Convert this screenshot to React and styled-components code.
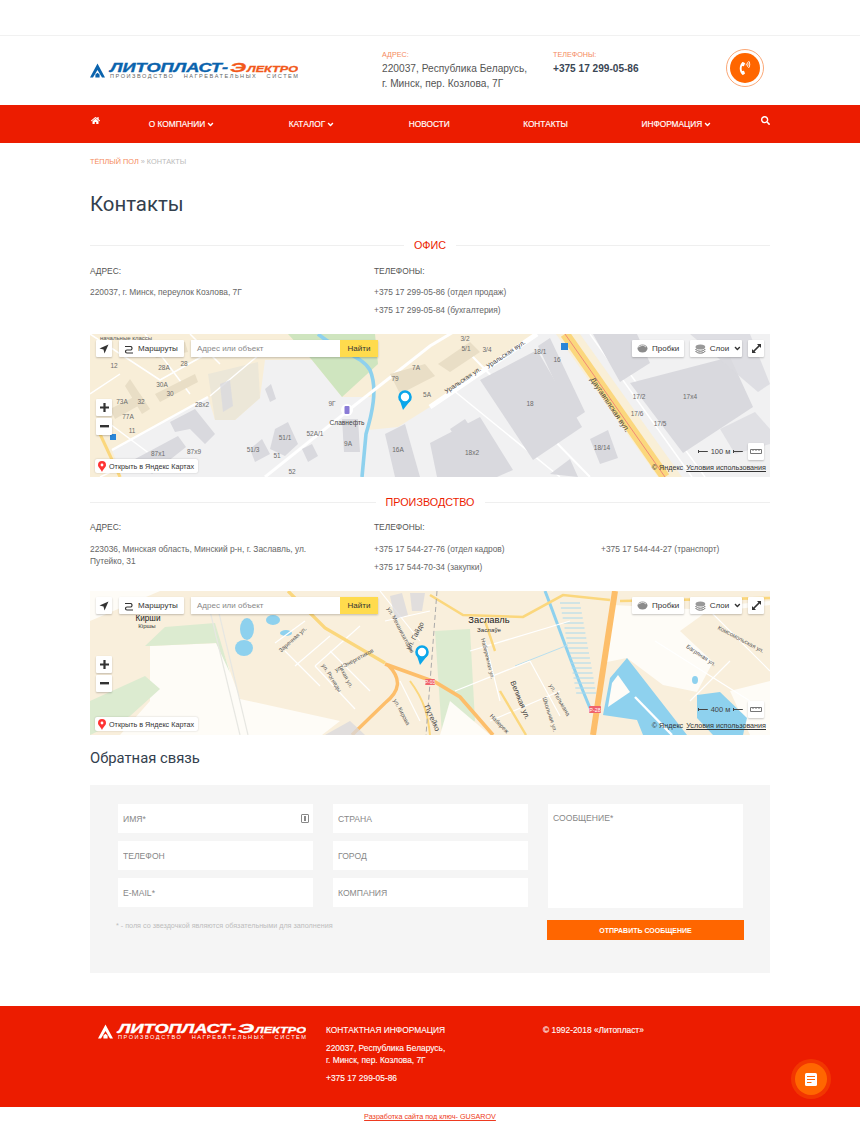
import React from 'react';
import styled, {createGlobalStyle} from 'styled-components';
import {FaHome, FaSearch, FaAngleDown, FaPhoneVolume} from 'react-icons/fa';

const RED = '#ec1c00';
const ORANGE = '#ff6600';

const GlobalStyle = createGlobalStyle`
  html, body {
    margin: 0;
    padding: 0;
    background: #fff;
    font-family: "Liberation Sans", Arial, sans-serif;
  }
  * { box-sizing: border-box; }
`;

const TopStrip = styled.div`
  height: 36px;
  border-bottom: 1px solid #f1f1f1;
`;

const Container = styled.div`
  width: 680px;
  margin: 0 auto;
`;

const Header = styled(Container)`
  height: 69px;
  display: flex;
  align-items: flex-start;
`;

const LogoSlot = styled.div`
  width: 292px;
  padding-top: 26px;
  flex: none;
`;

const HeaderCol = styled.div`
  width: ${p => p.$w}px;
  padding-top: 14px;
  flex: none;
`;

const HeaderLabel = styled.div`
  font-size: 7.2px;
  line-height: 10px;
  color: #f58a5c;
`;

const HeaderText = styled.div`
  font-size: 10.2px;
  line-height: 15px;
  margin-top: 1px;
  color: #555;
`;

const HeaderPhone = styled.div`
  font-size: 10.1px;
  line-height: 15px;
  margin-top: 1px;
  font-weight: bold;
  color: #3a4654;
`;

const CallRing = styled.div`
  width: 38px;
  height: 38px;
  margin: 13px 0 0 34px;
  border-radius: 50%;
  border: 1px solid #fba877;
  display: flex;
  align-items: center;
  justify-content: center;
`;

const CallDot = styled.div`
  width: 30px;
  height: 30px;
  border-radius: 50%;
  background: ${ORANGE};
  color: #fff;
  display: flex;
  align-items: center;
  justify-content: center;
`;

const NavBar = styled.nav`
  height: 38px;
  background: ${RED};
`;

const NavInner = styled(Container)`
  height: 100%;
  display: flex;
  align-items: center;
  justify-content: space-between;
  color: #fff;
`;

const NavIcon = styled.div`
  display: flex;
  margin: -8px 0 0 ${p => p.$left || 0}px;
  font-size: 9px;
`;

const Menu = styled.div`
  display: flex;
  gap: 73.5px;
`;

const MenuItem = styled.div`
  display: flex;
  align-items: center;
  gap: 1px;
  font-size: 8.3px;
  line-height: 11px;
  -webkit-text-stroke: 0.15px #fff;
  white-space: nowrap;
`;

const Crumbs = styled.div`
  margin-top: 14px;
  font-size: 7.3px;
  line-height: 10px;
  color: #bbb;
  & span { color: #f58a5c; }
`;

const PageTitle = styled.h1`
  margin: 23px 0 0;
  font-family: Roboto, sans-serif;
  font-weight: 400;
  font-size: 20.4px;
  line-height: 28px;
  color: #33404d;
`;

const SectionHeading = styled.div`
  display: flex;
  align-items: center;
  justify-content: center;
  margin-top: ${p => p.$top}px;
  height: 14px;
  font-size: 10.8px;
  color: ${RED};
  &::before, &::after {
    content: '';
    flex: 1;
    height: 1px;
    background: #efefef;
  }
  & span { padding: 0 10px; }
`;

const ContactGrid = styled.div`
  display: grid;
  grid-template-columns: 284px 227px 1fr;
  margin-top: ${p => p.$top}px;
  font-size: 8.4px;
  color: #666;
`;

const ContactLabel = styled.div`
  line-height: 11px;
  margin-bottom: ${p => p.$gap}px;
  color: #555;
`;

const ContactLine = styled.div`
  line-height: 12px;
  min-height: 18px;
`;

const AddressText = styled.div`
  line-height: 12px;
  width: 225px;
`;

const MapBox = styled.div`
  position: relative;
  width: 680px;
  height: ${p => p.$h}px;
  margin-top: ${p => p.$top}px;
  overflow: hidden;
  & > svg { display: block; }
`;

const MapGroup = styled.div`
  position: absolute;
  left: ${p => p.$left ?? 'auto'};
  right: ${p => p.$right ?? 'auto'};
  top: ${p => p.$topPos ?? 'auto'};
  bottom: ${p => p.$bottom ?? 'auto'};
  display: flex;
  flex-direction: ${p => p.$column ? 'column' : 'row'};
  align-items: center;
  gap: ${p => p.$gap ?? 6}px;
`;

const MapBtn = styled.div`
  height: 17px;
  width: ${p => p.$w}px;
  flex: none;
  background: #fff;
  border-radius: 1px;
  box-shadow: 0 1px 2px rgba(0,0,0,.22);
  display: flex;
  align-items: center;
  justify-content: ${p => p.$center ? 'center' : 'flex-start'};
  padding: ${p => p.$center ? '0' : '0 0 0 5px'};
  gap: 4px;
  font-size: 8px;
  color: #333;
  white-space: nowrap;
`;

const SearchBox = styled.div`
  display: flex;
  width: 187px;
  height: 17px;
  box-shadow: 0 1px 2px rgba(0,0,0,.22);
  background: #fff;
`;

const SearchField = styled.div`
  flex: 1;
  padding-left: 6px;
  font-size: 8px;
  line-height: 17px;
  color: #888;
`;

const SearchButton = styled.div`
  width: 38px;
  background: #ffdb4d;
  font-size: 8px;
  line-height: 17px;
  text-align: center;
  color: #333;
`;

const OpenLink = styled.div`
  height: 14px;
  display: flex;
  align-items: center;
  gap: 3px;
  padding: 0 4px 0 3px;
  background: #fff;
  border-radius: 2px;
  box-shadow: 0 0 2px rgba(0,0,0,.2);
  font-size: 7.2px;
  color: #333;
  white-space: nowrap;
`;

const ScaleText = styled.div`
  width: 45px;
  display: flex;
  align-items: center;
  gap: 3px;
  font-size: 7.5px;
  color: #444;
  white-space: nowrap;
  &::before, &::after {
    content: '';
    flex: 1;
    height: 3px;
    border-left: 1px solid #444;
    background: linear-gradient(#444, #444) center / 100% 1px no-repeat;
  }
`;

const Attribution = styled.div`
  font-size: 7.2px;
  color: #333;
  white-space: nowrap;
  & u { margin-left: 3px; }
`;

const FormTitle = styled.h2`
  margin: 13px 0 0;
  font-family: Roboto, sans-serif;
  font-weight: 400;
  font-size: 14.8px;
  line-height: 20px;
  color: #33404d;
`;

const FormPanel = styled.form`
  margin-top: 17px;
  height: 188px;
  padding: 19px 27px 0 28px;
  background: #f5f5f5;
  display: grid;
  grid-template-columns: 195px 195px 195px;
  grid-auto-rows: min-content;
  column-gap: 20px;
`;

const FieldColumn = styled.div`
  display: flex;
  flex-direction: column;
  gap: 8px;
`;

const FieldWrap = styled.div`
  position: relative;
`;

const Field = styled.input`
  display: block;
  width: 100%;
  height: 29px;
  border: 0;
  outline: 0;
  background: #fff;
  padding: 0 5px;
  font-family: inherit;
  font-size: 8.6px;
  &::placeholder { color: #888; opacity: 1; }
`;

const MessageField = styled.textarea`
  display: block;
  width: 100%;
  height: 104px;
  border: 0;
  outline: 0;
  resize: none;
  background: #fff;
  padding: 9px 5px;
  font-family: inherit;
  font-size: 8.6px;
  &::placeholder { color: #888; opacity: 1; }
`;

const KeyBadge = styled.div`
  position: absolute;
  top: 10px;
  right: 4px;
  width: 8px;
  height: 9px;
  border: 1px solid #888;
  border-radius: 1px;
  &::after {
    content: '';
    position: absolute;
    left: 2px;
    top: 1px;
    width: 2px;
    height: 5px;
    background: #888;
  }
`;

const SubmitButton = styled.button`
  display: block;
  width: 197px;
  height: 20px;
  margin: 12px 0 0 -1px;
  border: 0;
  background: ${ORANGE};
  color: #fff;
  font-family: inherit;
  font-size: 7px;
  font-weight: bold;
  text-align: center;
  padding: 0;
`;

const Note = styled.div`
  grid-column: 1 / 3;
  margin: -19px 0 0 -2px;
  font-size: 7.2px;
  line-height: 9px;
  color: #bdbdbd;
`;

const Footer = styled.footer`
  margin-top: 33px;
  height: 101px;
  background: ${RED};
  color: #fff;
`;

const FooterInner = styled(Container)`
  display: flex;
  font-size: 8.4px;
`;

const FooterLogo = styled.div`
  width: 236px;
  padding: 17px 0 0 8px;
  flex: none;
`;

const FooterCol = styled.div`
  width: ${p => p.$w}px;
  flex: none;
  padding-top: 18px;
`;

const FooterLine = styled.div`
  line-height: 12px;
  margin-top: ${p => p.$top || 0}px;
  -webkit-text-stroke: 0.1px #fff;
`;

const DevLine = styled.div`
  height: 22px;
  padding-top: 5px;
  text-align: center;
  font-size: 7.2px;
  line-height: 10px;
  color: #ee3a20;
  text-decoration: underline;
`;

const Fab = styled.div`
  position: fixed;
  right: 33px;
  bottom: 34px;
  width: 32px;
  height: 32px;
  border-radius: 50%;
  background: ${ORANGE};
  box-shadow: 0 0 0 4px rgba(255, 102, 0, .35);
  display: flex;
  align-items: center;
  justify-content: center;
`;

const LOGO_FONT = "'Liberation Sans', sans-serif";

const Logo = ({main, accent, sub}) => (
  <svg width="208" height="17" viewBox="0 0 208 17">
    <path fillRule="evenodd" fill={main}
      d="M0 15.5 L3 15.5 L7.5 8 L12 15.5 L15 15.5 L7.5 1.5 Z M5.4 15.5 L5.4 12.6 L7.5 10.8 L9.6 12.6 L9.6 15.5 Z"/>
    <g fontFamily={LOGO_FONT} fontWeight="bold" fontStyle="italic">
      <text x="20" y="10" fontSize="12.6" fill={main} stroke={main} strokeWidth=".35"
        textLength="118" lengthAdjust="spacingAndGlyphs">ЛИТОПЛАСТ-</text>
      <text x="140" y="10" fontSize="12.6" fill={accent} stroke={accent} strokeWidth=".35"
        textLength="16" lengthAdjust="spacingAndGlyphs">Э</text>
      <text x="157" y="10" fontSize="8.8" fill={accent} stroke={accent} strokeWidth=".3"
        textLength="51" lengthAdjust="spacingAndGlyphs">ЛЕКТРО</text>
    </g>
    <text x="20" y="16.4" fontFamily={LOGO_FONT} fontSize="5.6" fill={sub}
      textLength="188" lengthAdjust="spacing" xmlSpace="preserve">ПРОИЗВОДСТВО   НАГРЕВАТЕЛЬНЫХ   СИСТЕМ</text>
  </svg>
);

const Label = ({x, y, size = 6.5, fill = '#6b6b6b', r = 0, children}) => (
  <text x={x} y={y} fontSize={size} fill={fill} fontFamily={LOGO_FONT}
    textAnchor="middle" transform={r ? `rotate(${r} ${x} ${y})` : undefined}>{children}</text>
);

const Pin = ({x, y}) => (
  <g>
    <path d={`M${x - 2} ${y + 13} L${x - 5} ${y + 4} L${x + 5} ${y + 4} Z`} fill="#0ba6ea"/>
    <circle cx={x} cy={y} r="5.5" fill="#fff" stroke="#0ba6ea" strokeWidth="2.6"/>
  </g>
);

const BLD = '#d9d9de';
const BEIGE_BLD = '#e9dec6';

const OfficeMap = () => (
  <svg width="680" height="143" viewBox="0 0 680 143">
    <rect width="680" height="143" fill="#f1f1f2"/>
    <path d="M0 0 H447 L340 73 L308 93 L278 96 L282 63 L252 63 L222 26 L175 26 L170 64 L145 86 L125 86 L118 63 L22 116 L32 143 H0 Z" fill="#f8eed8"/>
    <path d="M118 40 L168 28 L170 64 L145 86 L125 86 Z" fill="#ece7d8"/>
    <path d="M198 0 H285 L288 30 L252 63 L222 26 Z" fill="#cfe5bf"/>
    <path d="M228 0 C250 18 272 22 280 36 C288 55 282 80 276 100 L272 143" fill="none" stroke="#8ed1ee" strokeWidth="3.6"/>
    <path d="M466 0 L568 143 H592 L490 0 Z" fill="#f9efd7"/>
    <path d="M0 0 L70 46 L120 18 M20 90 L60 120 L10 143 M55 0 L100 60 M0 60 L30 40 M100 0 L130 30" fill="none" stroke="#fff" strokeWidth="1.5"/>
    <path d="M22 116 L118 63" fill="none" stroke="#fff" strokeWidth="2.5"/>
    <path d="M120 62 L170 20" fill="none" stroke="#fff" strokeWidth="1.5"/>
    <path d="M10 100 L30 143" fill="none" stroke="#fbd77d" strokeWidth="3"/>
    <path d="M175 143 L260 75 L340 12 L365 -3" fill="none" stroke="#fff" strokeWidth="3"/>
    <path d="M340 73 L447 0" fill="none" stroke="#fff" strokeWidth="5"/>
    <path d="M363 56 L470 143" fill="none" stroke="#fff" strokeWidth="1.5"/>
    <path d="M380 20 L500 143" fill="none" stroke="#fff" strokeWidth="2"/>
    <path d="M475 0 L575 143" fill="none" stroke="#fbd77d" strokeWidth="10"/>
    <path d="M475 0 L575 143" fill="none" stroke="#f08a76" strokeWidth="1"/>
    <path d="M500 0 L602 143 M511 0 L615 143" fill="none" stroke="#fff" strokeWidth="1.5"/>
    <g fill={BLD}>
      <path d="M390 46 L447 16 L492 93 L443 126 Z"/>
      <path d="M340 109 L390 83 L423 136 L407 143 H347 Z"/>
      <path d="M540 49 L640 23 L663 73 L593 119 Z"/>
      <path d="M503 0 L530 48 L560 29 L547 0 Z"/>
      <path d="M448 12 L460 4 L495 78 L483 86 Z"/>
      <path d="M500 105 L518 96 L528 124 L510 130 Z"/>
      <path d="M460 140 L480 125 L488 143 Z"/>
      <path d="M600 0 L660 0 L680 50 L668 58 Z" opacity=".8"/>
      <path d="M630 95 L665 78 L680 95 L680 110 L645 120 Z" opacity=".7"/>
      <path d="M80 88 L105 75 L125 100 L115 110 L100 95 L85 98 Z"/>
      <path d="M45 125 L88 102 L96 113 L62 140 Z"/>
      <path d="M130 50 L140 46 L143 72 L133 78 Z" opacity=".8"/>
      <path d="M175 55 L181 50 L186 65 L180 68 Z"/>
      <path d="M185 95 L198 88 L208 110 L195 122 L180 115 Z"/>
      <path d="M160 115 L172 105 L180 120 L165 128 Z"/>
      <path d="M252 85 L268 85 L270 118 L254 118 Z"/>
      <path d="M295 100 L315 90 L330 143 H305 Z"/>
      <path d="M360 95 L375 85 L385 100 L370 110 Z"/>
      <path d="M212 115 L222 110 L228 122 L218 128 Z"/>
    </g>
    <g fill={BEIGE_BLD}>
      <path d="M40 45 L60 75 L52 80 L35 52 Z"/>
      <path d="M65 60 L105 40 L108 48 L70 68 Z"/>
      <path d="M20 75 L50 60 L55 68 L25 85 Z"/>
      <path d="M300 40 L335 30 L345 42 L310 60 Z"/>
      <path d="M348 30 L380 8 L390 18 L360 38 Z"/>
      <path d="M60 15 L95 8 L98 18 L66 24 Z"/>
    </g>
    <circle cx="257" cy="76" r="6" fill="#fff"/>
    <rect x="254.5" y="72" width="5" height="8" rx="1" fill="#8a7bd6"/>
    <rect x="20" y="100" width="6" height="6" fill="#2a86d8"/>
    <rect x="471" y="9" width="7" height="7" fill="#2a86d8"/>
    <Label x={24} y={34}>12</Label>
    <Label x={74} y={36}>28A</Label>
    <Label x={94} y={32}>28</Label>
    <Label x={72} y={53}>30A</Label>
    <Label x={80} y={62}>30</Label>
    <Label x={32} y={70}>73A</Label>
    <Label x={51} y={70}>32</Label>
    <Label x={38} y={85}>77A</Label>
    <Label x={42} y={99}>11</Label>
    <Label x={112} y={73}>28x2</Label>
    <Label x={68} y={122}>87x1</Label>
    <Label x={104} y={120}>87x9</Label>
    <Label x={242} y={72}>9Г</Label>
    <Label x={257} y={91} size={6.6} fill="#444">Славнефть</Label>
    <Label x={225} y={102}>52A/1</Label>
    <Label x={195} y={106}>51/1</Label>
    <Label x={163} y={118}>51/3</Label>
    <Label x={187} y={124}>51</Label>
    <Label x={202} y={140}>52</Label>
    <Label x={258} y={112}>9A</Label>
    <Label x={308} y={118}>16A</Label>
    <Label x={305} y={47}>79</Label>
    <Label x={326} y={36}>7A</Label>
    <Label x={337} y={63}>5A</Label>
    <Label x={36} y={6} size={6} fill="#555">начальные классы</Label>
    <Label x={376} y={17}>5/1</Label>
    <Label x={397} y={18}>3/4</Label>
    <Label x={375} y={7}>3/2</Label>
    <Label x={450} y={20}>18/1</Label>
    <Label x={467} y={28}>16</Label>
    <Label x={440} y={72}>18</Label>
    <Label x={382} y={121}>18x2</Label>
    <Label x={512} y={116}>18/14</Label>
    <Label x={549} y={65}>17/2</Label>
    <Label x={547} y={82}>17/6</Label>
    <Label x={570} y={92}>17/5</Label>
    <Label x={600} y={65}>17x4</Label>
    <Label x={374} y={48} r={-34} fill="#444">Уральская ул.</Label>
    <Label x={417} y={22} r={-34} fill="#444">Уральская вул.</Label>
    <Label x={518} y={72} size={7.4} r={56} fill="#444">Даугавпілская вул.</Label>
    <Pin x={315} y={63}/>
  </svg>
);

const FactoryMap = () => (
  <svg width="680" height="144" viewBox="0 0 680 144">
    <rect width="680" height="144" fill="#f9efdc"/>
    <path d="M60 55 L130 52 L150 108 L250 130 L232 144 H30 L60 110 Z" fill="#fefcf7"/>
    <path d="M0 110 L55 85 L70 98 L40 125 L0 144 Z" fill="#dcebd0"/>
    <path d="M55 55 L75 36 L125 32 L140 82 L126 52 L60 55 Z" fill="#dcebd0"/>
    <path d="M60 0 H70 L0 30 V0 Z" fill="#fefcf7"/>
    <path d="M523 14 L600 18 L680 10 L680 14 L615 22 L590 40 L623 71 L607 101 L573 94 L537 67 L517 71 Z" fill="#fefcf7"/>
    <path d="M345 40 L380 38 L385 130 L352 144 Z" fill="#dcebd0"/>
    <path d="M360 110 L400 144 H350 Z" fill="#fefcf7"/>
    <path d="M640 100 L680 90 V144 H660 Z" fill="#fefcf7"/>
    <g fill="#8ed1ee">
      <ellipse cx="157" cy="38" rx="7" ry="11"/>
      <ellipse cx="154" cy="57" rx="9" ry="8"/>
      <ellipse cx="183" cy="29" rx="7" ry="5"/>
      <ellipse cx="196" cy="42" rx="6" ry="3"/>
      <path d="M537 67 L597 144 H553 L547 129 L513 124 L520 87 Z"/>
      <path d="M607 104 L630 101 L657 127 L653 144 H623 L607 127 Z"/>
      <ellipse cx="605" cy="89" rx="3" ry="4"/>
    </g>
    <path d="M528 84 L540 101 L518 116 L522 92 Z" fill="#fefcf7"/>
    <path d="M545 106 L582 144" fill="none" stroke="#fff" strokeWidth="2.4"/>
    <path d="M455 0 C465 25 480 70 500 117" fill="none" stroke="#8ed1ee" strokeWidth="3"/>
    <path d="M425 75 L478 54" fill="none" stroke="#b9dfee" strokeWidth="1"/>
    <g stroke="#a8d9ee" strokeWidth="1">
      {Array.from({length: 19}, (_, i) => (
        <line key={i} x1={470 + i * 0.9} y1={12 + i * 5} x2={490 + i * 0.9} y2={12 + i * 5}/>
      ))}
    </g>
    <g fill="none" stroke="#fff" strokeWidth="1.2">
      <path d="M185 52 L215 30 M195 60 L230 95 M225 75 L270 35 M225 75 L265 118 M240 60 L280 100 M205 75 L240 45"/>
      <path d="M290 0 L330 50 M295 30 L340 20 M310 90 L330 130"/>
      <path d="M380 60 L480 30 M365 100 L440 70 M400 130 L470 100 M440 70 L470 125 M395 50 L410 110"/>
      <path d="M565 50 L660 110 M620 20 L680 80 M640 70 L600 110"/>
      <path d="M120 20 L150 144 M128 18 L158 144" stroke="#e7e7e2"/>
    </g>
    <path d="M198 0 L235 37 L295 72" fill="none" stroke="#fbd77d" strokeWidth="3.2"/>
    <path d="M295 73 L345 91 L370 106 L403 144" fill="none" stroke="#fdbe6a" strokeWidth="3.6"/>
    <path d="M298 74 C312 88 310 100 295 112 L262 144" fill="none" stroke="#fdbe6a" strokeWidth="3.4"/>
    <path d="M320 90 C335 110 338 125 340 144" fill="none" stroke="#fbd77d" strokeWidth="2"/>
    <path d="M340 4 L373 24 L433 26 L473 4 L520 9 M530 10 L680 7" fill="none" stroke="#fbd77d" strokeWidth="2.6"/>
    <path d="M405 60 L395 30 M410 100 L436 144" fill="none" stroke="#fbd77d" strokeWidth="2.4"/>
    <path d="M525 0 L503 144" fill="none" stroke="#fdbe6a" strokeWidth="6"/>
    <path d="M347 0 L336 144" fill="none" stroke="#aaa" strokeWidth="1" strokeDasharray="5 3"/>
    <g fill={BLD} opacity=".75">
      <path d="M300 5 L312 2 L318 24 L305 28 Z"/>
      <path d="M320 2 L335 2 L332 20 L322 20 Z"/>
      <path d="M235 144 L260 130 L275 144 Z"/>
    </g>
    <rect x="335" y="88" width="10" height="6" rx="1" fill="#f0636c"/>
    <text x="340" y="93" fontSize="5" fill="#fff" textAnchor="middle" fontFamily={LOGO_FONT}>Р-03</text>
    <rect x="499" y="115" width="12" height="7" rx="1" fill="#f0636c"/>
    <text x="505" y="121" fontSize="5.4" fill="#fff" textAnchor="middle" fontFamily={LOGO_FONT}>Р-28</text>
    <Label x={58} y={30} size={8.2} fill="#222">Кирши</Label>
    <Label x={57} y={37} size={6} fill="#333">Кіршы</Label>
    <Label x={204} y={50} size={5.8} r={-42} fill="#555">Заречная ул.</Label>
    <Label x={240} y={88} size={5.8} r={58} fill="#555">ул. Рогнеды</Label>
    <Label x={265} y={71} size={5.8} r={-28} fill="#555">ул. Энергетиков</Label>
    <Label x={254} y={86} size={5.8} r={62} fill="#555">Тихая ул.</Label>
    <Label x={309} y={40} size={5.8} r={62} fill="#555">ул. Механизаторов</Label>
    <Label x={327} y={46} size={7} r={-62} fill="#444">ул. Гайдо</Label>
    <Label x={310} y={122} size={5.8} r={62} fill="#555">ул. Кирова</Label>
    <Label x={340} y={128} size={7.4} r={66} fill="#444">Путейко</Label>
    <Label x={399} y={32} size={9.4} fill="#222">Заславль</Label>
    <Label x={399} y={41} size={6.2} fill="#333">Заслаўе</Label>
    <Label x={396} y={68} size={5.6} r={76} fill="#555">Набережная ул.</Label>
    <Label x={428} y={110} size={7.4} r={68} fill="#333">Великая ул.</Label>
    <Label x={468} y={110} size={5.8} r={60} fill="#555">ул. Тельмана</Label>
    <Label x={458} y={124} size={5.8} r={72} fill="#555">Школьная ул.</Label>
    <Label x={408} y={134} size={5.8} r={46} fill="#555">Набереж</Label>
    <Label x={650} y={50} size={5.8} r={28} fill="#555">Комсомольская ул.</Label>
    <Label x={610} y={66} size={5.8} r={34} fill="#555">Багряная ул.</Label>
    <Pin x={332} y={61}/>
  </svg>
);

const MapControls = ({scale}) => (
  <>
    <MapGroup $left="6px" $topPos="6px" $gap={7}>
      <MapBtn $w={16} $center>
        <svg width="10" height="10" viewBox="0 0 10 10"><path d="M9.5 .5 L.5 4.5 L4.5 5.5 L5.5 9.5 Z" fill="#333"/></svg>
      </MapBtn>
      <MapBtn $w={65}>
        <svg width="10" height="10" viewBox="0 0 10 10" fill="none" stroke="#333" strokeWidth="1.2">
          <path d="M1 2.5 H7 A2 2 0 0 1 7 6 H3 A1.5 1.5 0 0 0 3 9 H9"/>
        </svg>
        Маршруты
      </MapBtn>
      <SearchBox>
        <SearchField>Адрес или объект</SearchField>
        <SearchButton>Найти</SearchButton>
      </SearchBox>
    </MapGroup>
    <MapGroup $right="6px" $topPos="6px">
      <MapBtn $w={52}>
        <svg width="11" height="9" viewBox="0 0 11 9"><ellipse cx="5.5" cy="4.5" rx="5" ry="4" fill="#8b8b8b"/><path d="M1 3 L6 1 L9 3" stroke="#ddd" fill="none"/></svg>
        Пробки
      </MapBtn>
      <MapBtn $w={52}>
        <svg width="11" height="10" viewBox="0 0 11 10"><ellipse cx="5.5" cy="3" rx="5" ry="2.6" fill="#999"/><path d="M.5 5 C2 8 9 8 10.5 5 M.5 7 C2 10 9 10 10.5 7" stroke="#666" fill="none"/></svg>
        Слои
        <FaAngleDown size={9}/>
      </MapBtn>
      <MapBtn $w={16} $center>
        <svg width="9" height="9" viewBox="0 0 9 9" fill="#333"><path d="M9 0 V4 L7.6 2.6 L2.6 7.6 L4 9 H0 V5 L1.4 6.4 L6.4 1.4 L5 0 Z"/></svg>
      </MapBtn>
    </MapGroup>
    <MapGroup $left="6px" $topPos="65px" $column $gap={2}>
      <MapBtn $w={16} $center><svg width="9" height="9" viewBox="0 0 9 9" fill="#333"><path d="M3.4 0 H5.6 V3.4 H9 V5.6 H5.6 V9 H3.4 V5.6 H0 V3.4 H3.4 Z"/></svg></MapBtn>
      <MapBtn $w={16} $center><svg width="9" height="3" viewBox="0 0 9 3" fill="#333"><rect width="9" height="2.4"/></svg></MapBtn>
    </MapGroup>
    <MapGroup $left="5px" $bottom="4px">
      <OpenLink>
        <svg width="8" height="11" viewBox="0 0 8 11"><path d="M4 0 A4 4 0 0 1 8 4 C8 6.5 5 8 4 11 C3 8 0 6.5 0 4 A4 4 0 0 1 4 0 Z" fill="#f33"/><circle cx="4" cy="4" r="1.4" fill="#fff"/></svg>
        Открыть в Яндекс Картах
      </OpenLink>
    </MapGroup>
    <MapGroup $right="6px" $bottom="17px" $gap={5}>
      <ScaleText>{scale}</ScaleText>
      <MapBtn $w={16} $center>
        <svg width="12" height="5" viewBox="0 0 12 5" fill="none" stroke="#777"><path d="M.5 .5 H11.5 V4.5 H.5 Z M3 .5 V2 M6 .5 V2 M9 .5 V2"/></svg>
      </MapBtn>
    </MapGroup>
    <MapGroup $right="4px" $bottom="5px">
      <Attribution>© Яндекс<u>Условия использования</u></Attribution>
    </MapGroup>
  </>
);

const App = () => (
  <>
    <GlobalStyle/>
    <TopStrip/>
    <Header>
      <LogoSlot>
        <Logo main="#0a63ad" accent="#f2591a" sub="#666"/>
      </LogoSlot>
      <HeaderCol $w={171}>
        <HeaderLabel>АДРЕС:</HeaderLabel>
        <HeaderText>220037, Республика Беларусь,<br/>г. Минск, пер. Козлова, 7Г</HeaderText>
      </HeaderCol>
      <HeaderCol $w={139}>
        <HeaderLabel>ТЕЛЕФОНЫ:</HeaderLabel>
        <HeaderPhone>+375 17 299-05-86</HeaderPhone>
      </HeaderCol>
      <CallRing>
        <CallDot><FaPhoneVolume size={14}/></CallDot>
      </CallRing>
    </Header>
    <NavBar>
      <NavInner>
        <NavIcon $left={1}><FaHome/></NavIcon>
        <Menu>
          <MenuItem>О КОМПАНИИ <FaAngleDown size={9}/></MenuItem>
          <MenuItem>КАТАЛОГ <FaAngleDown size={9}/></MenuItem>
          <MenuItem>НОВОСТИ</MenuItem>
          <MenuItem>КОНТАКТЫ</MenuItem>
          <MenuItem>ИНФОРМАЦИЯ <FaAngleDown size={9}/></MenuItem>
        </Menu>
        <NavIcon><FaSearch/></NavIcon>
      </NavInner>
    </NavBar>
    <Container>
      <Crumbs><span>ТЁПЛЫЙ ПОЛ</span> » КОНТАКТЫ</Crumbs>
      <PageTitle>Контакты</PageTitle>
      <SectionHeading $top={20}><span>ОФИС</span></SectionHeading>
      <ContactGrid $top={14}>
        <div>
          <ContactLabel $gap={9}>АДРЕС:</ContactLabel>
          <AddressText>220037, г. Минск, переулок Козлова, 7Г</AddressText>
        </div>
        <div>
          <ContactLabel $gap={9}>ТЕЛЕФОНЫ:</ContactLabel>
          <ContactLine>+375 17 299-05-86 (отдел продаж)</ContactLine>
          <ContactLine>+375 17 299-05-84 (бухгалтерия)</ContactLine>
        </div>
      </ContactGrid>
      <MapBox $h={143} $top={12}>
        <OfficeMap/>
        <MapControls scale="100 м"/>
      </MapBox>
      <SectionHeading $top={18}><span>ПРОИЗВОДСТВО</span></SectionHeading>
      <ContactGrid $top={13}>
        <div>
          <ContactLabel $gap={10}>АДРЕС:</ContactLabel>
          <AddressText>223036, Минская область, Минский р-н, г. Заславль, ул. Путейко, 31</AddressText>
        </div>
        <div>
          <ContactLabel $gap={10}>ТЕЛЕФОНЫ:</ContactLabel>
          <ContactLine>+375 17 544-27-76 (отдел кадров)</ContactLine>
          <ContactLine>+375 17 544-70-34 (закупки)</ContactLine>
        </div>
        <div>
          <ContactLabel $gap={10}>&nbsp;</ContactLabel>
          <ContactLine>+375 17 544-44-27 (транспорт)</ContactLine>
        </div>
      </ContactGrid>
      <MapBox $h={144} $top={12}>
        <FactoryMap/>
        <MapControls scale="400 м"/>
      </MapBox>
      <FormTitle>Обратная связь</FormTitle>
      <FormPanel>
        <FieldColumn>
          <FieldWrap>
            <Field placeholder="ИМЯ*"/>
            <KeyBadge/>
          </FieldWrap>
          <Field placeholder="ТЕЛЕФОН"/>
          <Field placeholder="E-MAIL*"/>
        </FieldColumn>
        <FieldColumn>
          <Field placeholder="СТРАНА"/>
          <Field placeholder="ГОРОД"/>
          <Field placeholder="КОМПАНИЯ"/>
        </FieldColumn>
        <div>
          <MessageField placeholder="СООБЩЕНИЕ*"/>
          <SubmitButton type="button">ОТПРАВИТЬ СООБЩЕНИЕ</SubmitButton>
        </div>
        <Note>* - поля со звездочкой являются обязательными для заполнения</Note>
      </FormPanel>
    </Container>
    <Footer>
      <FooterInner>
        <FooterLogo>
          <Logo main="#fff" accent="#fff" sub="#fff"/>
        </FooterLogo>
        <FooterCol $w={217}>
          <FooterLine>КОНТАКТНАЯ ИНФОРМАЦИЯ</FooterLine>
          <FooterLine $top={6}>220037, Республика Беларусь,<br/>г. Минск, пер. Козлова, 7Г</FooterLine>
          <FooterLine $top={6}>+375 17 299-05-86</FooterLine>
        </FooterCol>
        <FooterCol $w={200}>
          <FooterLine>© 1992-2018 «Литопласт»</FooterLine>
        </FooterCol>
      </FooterInner>
    </Footer>
    <DevLine>Разработка сайта под ключ- GUSAROV</DevLine>
    <Fab>
      <svg width="12" height="13" viewBox="0 0 12 13">
        <rect width="12" height="13" rx="1.5" fill="#fff"/>
        <path d="M2 3.5 H10 M2 6.5 H10 M2 9.5 H6.5" stroke={ORANGE} strokeWidth="1.2"/>
      </svg>
    </Fab>
  </>
);

export default App;
